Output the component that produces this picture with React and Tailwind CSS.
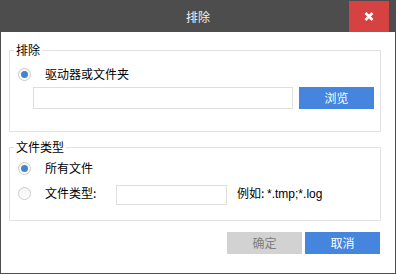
import React from "react";

const Radio = ({ checked }) => (
  <span className="flex h-[13px] w-[13px] shrink-0 items-center justify-center rounded-full border border-[#cbcbcb] bg-gradient-to-b from-[#f4f4f4] to-white">
    {checked && <span className="h-[7px] w-[7px] rounded-full bg-[#3f86cd]" />}
  </span>
);

export default function App() {
  return (
    <div className="flex h-[274px] w-[396px] flex-col bg-[#4d4d4d] p-px font-['Noto_Sans_CJK_SC',sans-serif] text-[12px] leading-[16px] text-black">
      {/* TITLE BAR */}
      <div className="relative flex h-[31px] shrink-0 items-center justify-center text-[#f2f2f2]">
        <span>排除</span>
        <button className="absolute top-0 right-[6px] flex h-[31px] w-[40px] items-center justify-center bg-[#d64242]">
          <svg width="10" height="9" viewBox="0 0 10 9">
            <path d="M1.5 1 L8.5 8 M8.5 1 L1.5 8" stroke="white" strokeWidth="2.6" />
          </svg>
        </button>
      </div>

      {/* BODY */}
      <div className="flex flex-1 flex-col bg-white">
        {/* EXCLUDE GROUP */}
        <fieldset className="mt-[11px] ml-2 w-[372px] border border-[#e2e2e2] pb-[22px]">
          <legend className="ml-[4px] px-[2px] leading-[14px]">排除</legend>
          <div className="mt-[9px] flex h-[16px] items-center pl-[8px]">
            <Radio checked />
            <span className="ml-[14px]">驱动器或文件夹</span>
          </div>
          <div className="mt-[5px] flex pl-[23px]">
            <input className="h-[22px] w-[260px] border border-[#dedede] outline-none" />
            <button className="ml-[6px] h-[22px] w-[75px] bg-[#4585dd] text-white">浏览</button>
          </div>
        </fieldset>

        {/* FILE TYPE GROUP */}
        <fieldset className="mt-[8px] ml-2 w-[372px] border border-[#e2e2e2] pb-[15px]">
          <legend className="ml-[4px] px-[2px] leading-[14px]">文件类型</legend>
          <div className="mt-[6px] flex h-[16px] items-center pl-[8px]">
            <Radio checked />
            <span className="ml-[14px]">所有文件</span>
          </div>
          <div className="mt-[9px] flex items-start pl-[8px]">
            <div className="flex h-[16px] items-center">
              <Radio />
              <span className="ml-[14px] w-[71px]">文件类型:</span>
            </div>
            <input className="h-[20px] w-[111px] border border-[#dedede] outline-none" />
            <span className="ml-[10px] h-[16px]">
              例如: <span className="font-['Liberation_Sans',sans-serif]">*.tmp;*.log</span>
            </span>
          </div>
        </fieldset>

        {/* BUTTONS */}
        <div className="mt-[11px] flex justify-end gap-[3px] pr-[15px]">
          <button className="h-[22px] w-[75px] bg-[#d2d2d2] text-[#7d7d7d]">确定</button>
          <button className="h-[22px] w-[75px] bg-[#4585dd] text-white">取消</button>
        </div>
      </div>
    </div>
  );
}
